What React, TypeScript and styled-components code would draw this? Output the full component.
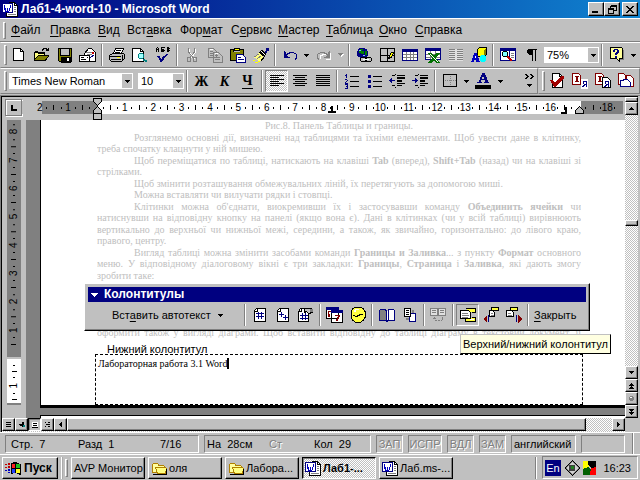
import React from "react";
import styled, { createGlobalStyle, css } from "styled-components";

const face = "#c0c0c0";
const shade = "#808080";
const navy = "#000080";
const checker = `conic-gradient(#fff 25%, ${face} 0 50%, #fff 0 75%, ${face} 0) 0 0 / 2px 2px`;

const raised = css`
  border: 1px solid;
  border-color: #fff #000 #000 #fff;
  box-shadow: inset -1px -1px ${shade};
`;
const sunken = css`
  border: 1px solid;
  border-color: ${shade} #fff #fff ${shade};
`;

const GlobalStyle = createGlobalStyle`
  *, *::before, *::after { box-sizing: border-box; }
  body { margin: 0; background: ${face}; font: 12px/14px "Liberation Sans", Arial, sans-serif; color: #000; }
  button, select { font: inherit; color: inherit; margin: 0; padding: 0; border: 0; border-radius: 0; background: none; outline: none; }
  u { text-underline-offset: 2px; text-decoration-thickness: 1px; }
`;

const Desktop = styled.div`
  display: flex;
  flex-direction: column;
  height: 100vh;
  min-height: 440px;
  overflow: hidden;
  background: ${face};
`;

/* ---------- title bar ---------- */

const TitleBar = styled.header`
  display: flex;
  align-items: center;
  gap: 3px;
  height: 18px;
  padding: 0 2px;
  background: linear-gradient(to right, #000080, #1084d0);
  color: #fff;
`;
const Title = styled.h1`
  flex: 1;
  margin: 0;
  font-size: 12px;
  line-height: 16px;
  font-weight: 700;
  white-space: nowrap;
`;
const WindowButtons = styled.div`
  display: flex;
  button:last-child { margin-left: 2px; }
`;
const CaptionButton = styled.button`
  ${raised}
  display: flex;
  align-items: center;
  justify-content: center;
  width: 16px;
  height: 14px;
  background: ${face};
`;

/* ---------- menus and toolbars ---------- */

const MenuBar = styled.nav`
  display: flex;
  align-items: center;
  height: 24px;
  padding-left: 3px;
  border-top: 1px solid #fff;
  border-bottom: 1px solid ${shade};
`;
const Grip = styled.span`
  flex: none;
  width: 3px;
  height: 17px;
  margin-right: 5px;
  border: 1px solid;
  border-color: #fff ${shade} ${shade} #fff;
`;
const MenuItem = styled.button<{ $w: number }>`
  flex: none;
  width: ${(p) => p.$w}px;
  text-align: left;
  white-space: nowrap;
`;
const ToolRow = styled.div`
  display: flex;
  height: 26px;
`;
const ToolBar = styled.div<{ $grow?: boolean }>`
  display: flex;
  align-items: center;
  flex: ${(p) => (p.$grow ? "1 1 auto" : "0 0 auto")};
  padding: 0 2px 0 3px;
  border: 1px solid;
  border-color: #fff ${shade} ${shade} transparent;
  ${Grip} { margin-right: 0; height: 20px; }
`;
const ToolButton = styled.button<{ $pressed?: boolean }>`
  display: flex;
  flex: none;
  align-items: center;
  justify-content: center;
  width: 23px;
  height: 22px;
  ${(p) => p.$pressed && css`${sunken} background: ${checker};`}
`;
const DropButton = styled(ToolButton)`
  width: 11px;
`;
const Separator = styled.span`
  flex: none;
  width: 2px;
  height: 22px;
  margin: 0 2px;
  border-left: 1px solid ${shade};
  border-right: 1px solid #fff;
`;
const Spacer = styled.span`
  flex: 1;
`;
const ComboBox = styled.label<{ $w: number }>`
  display: flex;
  flex: none;
  width: ${(p) => p.$w}px;
  height: 16px;
  margin-left: 2px;
  padding: 1px;
  background: #fff;
  & + & { margin-left: 5px; }
  select {
    flex: 1;
    min-width: 0;
    padding-left: 2px;
    appearance: none;
    font-size: 11px;
    line-height: 14px;
  }
`;
const ComboArrow = styled.span`
  display: flex;
  align-items: center;
  justify-content: center;
  width: 10px;
  background: ${face};
`;
const Letter = styled.span<{ $italic?: boolean; $under?: boolean }>`
  font: 700 14px/15px "Liberation Serif", "Times New Roman", serif;
  font-style: ${(p) => (p.$italic ? "italic" : "normal")};
  border-bottom: ${(p) => (p.$under ? "1px solid #000" : "0")};
`;

/* ---------- workspace ---------- */

const Workspace = styled.main`
  display: flex;
  flex: 1;
  min-height: 0;
  margin-top: 1px;
  border: solid ${shade};
  border-width: 1px 0 0 1px;
  padding-right: 2px;
`;
const DocumentColumn = styled.div`
  position: relative;
  display: flex;
  flex: 1;
  flex-direction: column;
  min-width: 0;
  border: solid #000;
  border-width: 1px 0 0 1px;
`;
const RulerRow = styled.div`
  position: relative;
  display: flex;
  flex: none;
  height: 23px;
  padding: 4px 0 6px 3px;
`;
const TabKind = styled.button`
  display: flex;
  flex: none;
  align-items: center;
  justify-content: center;
  width: 17px;
  height: 17px;
  margin-top: -2px;
  border: 1px solid ${shade};
  box-shadow: inset 1px 1px #fff, 1px 1px #fff;
`;
const HorizontalScale = styled.div`
  display: flex;
  flex: 1;
  min-width: 0;
  height: 13px;
  margin-right: 2px;
  padding-right: 5px;
  background: linear-gradient(to right, ${face} 20px, ${shade} 20px 75px, #fff 75px calc(100% - 42px), ${shade} calc(100% - 42px));
`;
const Centimetre = styled.span<{ $vertical?: boolean }>`
  display: grid;
  ${(p) => (p.$vertical ? "grid-template-rows: repeat(4, minmax(0, 1fr)); width: 100%;" : "grid-template-columns: repeat(4, minmax(0, 1fr));")}
  flex: 1 1 0;
  min-width: 0;
  min-height: 0;
`;
const Mark = styled.span<{ $kind: "tick" | "dot" | "num"; $vertical?: boolean }>`
  display: flex;
  align-items: center;
  justify-content: center;
  font-size: 10px;
  line-height: 12px;
  white-space: nowrap;
  ${(p) => p.$vertical && "writing-mode: vertical-rl; transform: rotate(180deg);"}
  &::before {
    content: ${(p) => (p.$kind === "num" ? "none" : '""')};
    width: ${(p) => (p.$vertical ? (p.$kind === "tick" ? 5 : 2) : 1)}px;
    height: ${(p) => (p.$vertical ? 1 : p.$kind === "tick" ? 5 : 2)}px;
    background: #000;
  }
`;
const Marker = styled.svg<{ $x: number; $y: number; $fromRight?: boolean }>`
  position: absolute;
  top: ${(p) => p.$y}px;
  ${(p) => (p.$fromRight ? "right" : "left")}: ${(p) => p.$x}px;
`;
const PageRow = styled.div`
  display: flex;
  flex: 1;
  min-height: 0;
`;
const VerticalScale = styled.div`
  display: flex;
  flex-direction: column;
  flex: none;
  width: 14px;
  margin: 0 5px;
`;
const ScaleBody = styled.div<{ $white?: boolean }>`
  display: flex;
  flex-direction: column;
  flex: none;
  overflow: hidden;
  background: ${(p) => (p.$white ? "#fff" : shade)};
  height: ${(p) => (p.$white ? 46 : 237)}px;
  margin-bottom: 2px;
  padding-top: 1px;
  border-bottom: ${(p) => (p.$white ? `2px solid ${shade}` : "0")};
  ${Centimetre} { flex: none; height: 28px; }
  ${Centimetre}:nth-child(3n + 1) { height: 29px; }
`;
const FooterMarks = styled.span`
  display: flex;
  flex-direction: column;
  align-items: center;
  justify-content: space-between;
  height: 43px;
  padding: 5px 0 3px;
`;
const Pages = styled.div`
  display: flex;
  flex: 1;
  flex-direction: column;
  gap: 7px;
  min-width: 0;
  padding-left: 14px;
  background: ${shade};
`;
const Page = styled.article`
  display: flex;
  flex: 1;
  flex-direction: column;
  min-height: 0;
  padding: 0 44px 0 56px;
  border-left: 1px solid #000;
  border-bottom: 3px solid #000;
  background: #fff;
`;
const NextPage = styled.div`
  height: 3px;
  border-top: 1px solid #000;
  border-left: 1px solid #000;
  background: #fff;
`;
const BodyText = styled.section`
  flex: 1;
  min-height: 0;
  overflow: hidden;
  color: ${face};
  font: 10px/12px "Liberation Serif", "Times New Roman", serif;
`;
const Line = styled.p<{ $indent?: boolean; $align?: "center" | "justify" }>`
  margin: 0;
  height: 12px;
  padding-left: ${(p) => (p.$indent ? 37 : 0)}px;
  text-align: ${(p) => p.$align ?? "left"};
  text-align-last: ${(p) => p.$align ?? "left"};
  white-space: ${(p) => (p.$align === "justify" ? "normal" : "nowrap")};
  &:nth-child(even) { height: 11px; }
`;
const FooterLabel = styled.h2`
  z-index: 1;
  height: 12px;
  margin: 0 10px;
  font-size: 11px;
  line-height: 14px;
  font-weight: 400;
`;
const FooterBox = styled.section`
  height: 51px;
  margin: 0 -2px;
  padding: 3px 2px;
  border: 1px dashed #000;
  font: 10px/12px "Liberation Serif", "Times New Roman", serif;
  span { border-right: 2px solid #000; }
`;

/* ---------- scroll bars ---------- */

const VerticalScroll = styled.div`
  display: flex;
  flex-direction: column;
  flex: none;
  width: 13px;
  border-top: 1px solid #000;
  background: ${checker};
`;
const ScrollButton = styled.button`
  ${raised}
  display: flex;
  flex: none;
  align-items: center;
  justify-content: center;
  width: 13px;
  height: 13px;
  background: ${face};
`;
const SplitHandle = styled.span`
  ${raised}
  height: 5px;
  background: ${face};
`;
const VerticalThumb = styled.span`
  ${raised}
  height: 6px;
  margin-top: 105px;
  background: ${face};
`;
const ScrollCorner = styled.span`
  height: 14px;
  background: ${face};
`;
const HorizontalScroll = styled.div`
  display: flex;
  flex: none;
  height: 14px;
  padding-bottom: 1px;
  background: ${checker};
`;
const ViewButton = styled(ScrollButton)<{ $active?: boolean }>`
  ${(p) => p.$active && `border-color: #000 #fff #fff #000; box-shadow: inset 1px 1px ${shade};`}
`;
const HorizontalThumb = styled.span`
  ${raised}
  flex: 1;
  margin-right: 26px;
  background: ${face};
`;

/* ---------- floating toolbar ---------- */

const Palette = styled.section`
  position: absolute;
  left: 82px;
  top: 186px;
  width: 506px;
  padding: 3px 3px 2px;
  ${raised}
  background: ${face};
  font-size: 11px;
`;
const PaletteTitle = styled.h2`
  display: flex;
  align-items: center;
  gap: 6px;
  height: 15px;
  margin: 0;
  padding-left: 3px;
  background: ${navy};
  color: #fff;
  font-size: 12px;
  line-height: 15px;
`;
const PaletteBody = styled.div`
  display: flex;
  align-items: center;
  height: 26px;
  padding-left: 24px;
`;
const PaletteText = styled.button<{ $wide?: boolean }>`
  display: flex;
  align-items: center;
  justify-content: space-between;
  width: ${(p) => (p.$wide ? 111 : 50)}px;
  margin-right: ${(p) => (p.$wide ? 19 : 0)}px;
  padding-left: ${(p) => (p.$wide ? 0 : 3)}px;
  white-space: nowrap;
`;
const TipAnchor = styled.span`
  position: relative;
  ${ToolButton} { background: ${face}; }
`;
const Tooltip = styled.span`
  position: absolute;
  left: 4px;
  top: 30px;
  padding: 2px;
  border: 1px solid;
  border-color: ${face} #000 #000 ${face};
  background: #ffffe1;
  white-space: nowrap;
  line-height: 14px;
`;

/* ---------- status bar and taskbar ---------- */

const StatusBar = styled.footer`
  display: flex;
  align-items: center;
  flex: none;
  gap: 5px;
  height: 22px;
  padding: 1px 4px 0 5px;
  border-top: 1px solid #fff;
  font-size: 11px;
  white-space: nowrap;
`;
const StatusPanel = styled.div<{ $w: number; $off?: boolean }>`
  ${sunken}
  display: flex;
  flex: 0 1 auto;
  width: ${(p) => p.$w}px;
  height: 18px;
  padding: 0 2px;
  line-height: 16px;
  ${(p) => p.$off && `color: ${shade}; text-shadow: 1px 1px #fff; justify-content: center;`}
`;
const Field = styled.span<{ $w?: number; $off?: boolean }>`
  flex: none;
  width: ${(p) => (p.$w ? p.$w + "px" : "auto")};
  white-space: pre;
  ${(p) => p.$off && `color: ${shade}; text-shadow: 1px 1px #fff;`}
`;
const TaskBar = styled.footer`
  display: flex;
  flex: none;
  align-items: center;
  gap: 3px;
  height: 26px;
  padding: 1px 2px;
  border-top: 1px solid #fff;
  font-size: 11px;
`;
const TaskButton = styled.button<{ $active?: boolean }>`
  ${raised}
  display: flex;
  flex: none;
  align-items: center;
  gap: 2px;
  width: 74px;
  height: 22px;
  padding-left: 2px;
  white-space: nowrap;
  ${(p) => p.$active && `font-weight: 700; border-color: #000 #fff #fff #000; box-shadow: inset 1px 1px ${shade}; background: ${checker};`}
  svg { flex: none; }
`;
const StartButton = styled(TaskButton)`
  width: 56px;
  font-size: 12px;
  font-weight: 700;
`;
const TaskGrip = styled.span`
  width: 7px;
  height: 22px;
  padding: 2px 0;
  border-left: 2px ridge #fff;
  &::after {
    content: "";
    display: block;
    width: 3px;
    height: 18px;
    margin-left: 2px;
    border: 1px solid;
    border-color: #fff ${shade} ${shade} #fff;
  }
`;
const Tray = styled.div`
  ${sunken}
  display: flex;
  align-items: center;
  justify-content: space-between;
  width: 96px;
  height: 23px;
  padding: 0 6px 0 2px;
  time { padding-left: 5px; }
`;
const Language = styled.span`
  width: 16px;
  height: 16px;
  background: ${navy};
  color: #fff;
  line-height: 16px;
  text-align: center;
`;

/* ---------- icons ---------- */

const Icon = ({ w = 16, h = 16, children }: { w?: number; h?: number; children: React.ReactNode }) => (
  <svg width={w} height={h} viewBox={`0 0 ${w} ${h}`} fill="none" shapeRendering="crispEdges" aria-hidden="true">
    {children}
  </svg>
);
const P = ({ d, f, s }: { d: string; f?: string; s?: string }) => <path d={d} fill={f ?? "none"} stroke={s ?? "none"} />;

const Down = () => <Icon w={5} h={3}><P d="M0 0h5v1H0zM1 1h3v1H1zM2 2h1v1H2z" f="#000" /></Icon>;
const DownGray = () => <Icon w={6} h={4}><P d="M1 1h5v1H1zM2 2h3v1H2zM3 3h1v1H3z" f="#fff" /><P d="M0 0h5v1H0zM1 1h3v1H1zM2 2h1v1H2z" f={shade} /></Icon>;
const Up = () => <Icon w={5} h={3}><P d="M0 2h5v1H0zM1 1h3v1H1zM2 0h1v1H2z" f="#000" /></Icon>;

const WordDoc = () => (
  <Icon>
    <P d="M6.5 1.5h6l3 3v11h-11v-5" f="#fff" s="#000" />
    <P d="M12.5 1.5v3h3" s="#000" />
    <P d="M12 6h2v1h-2zM12 8h2v1h-2zM12 10h2v1h-2zM6 13h8v1H6z" f={shade} />
    <P d="M0 2h11v10H0z" f={navy} />
    <P d="M1 3h9v8H1z" f="#fff" />
    <P d="M2 4h1v3h1v3h1V7h1v3h1V7h1V4h1v3H8v3H7v1H3V9H2z" f="#0000c0" />
  </Icon>
);
const Folder = () => (
  <Icon>
    <P d="M1.5 12.5v-8l1-1h4l1 1v1h5l1 1v6z" f="#ffffa0" s="#b08000" />
    <P d="M4.5 7.5h10l1 1-1 5H6.5z" f="#ffff80" s="#b08000" />
    <P d="M2 14h14v1H2zM15 9h1v5h-1z" f="#000" />
  </Icon>
);
const Sheet = ({ children }: { children?: React.ReactNode }) => (
  <Icon>
    <P d="M4.5 1.5h9v13h-11v-11z" f="#fff" s="#000" />
    <P d="M5.5 2v2.5H3" s="#000" />
    {children}
  </Icon>
);

const icons: Record<string, React.ReactNode> = {
  new: <Icon><P d="M2.5 1.5h7l3 3v9h-10z" f="#fff" s="#000" /><P d="M9.5 1.5v3h3" s="#000" /></Icon>,
  open: (
    <Icon w={17}>
      <P d="M1 5h1V4h3v1h7v3h4v1l-3 5H1z" f="#000" />
      <P d="M2 6h3v1h6v1H5l-3 4z" f="#ffff80" />
      <P d="M5 9h10l-3 4H2z" f="#808000" />
      <P d="M9.5 3.5v-1h1v-1h3v1h1v1h1M15.5 1v3M13 3.5h3" s="#000" />
    </Icon>
  ),
  save: (
    <Icon>
      <P d="M1.5 1.5h13v13h-12l-1-1z" f="#808000" s="#000" />
      <P d="M3.5 2v6.5h9V2M4 10h9v5H4z" s="#000" f="#000" />
      <P d="M4 2h8v6H4z" f={face} />
      <P d="M10 11h2v3h-2z" f="#fff" />
    </Icon>
  ),
  mail: (
    <Icon w={17}>
      <P d="M5.5 6.5l4-5h3l4 4v9h-11z" f="#fff" s="#000" />
      <P d="M7 5h8M8 7h5" s={shade} />
      <P d="M13 5h2v2h-2z" f="#c00000" />
      <P d="M8.5 8.5l3 2 4-3" s={navy} />
      <P d="M.5 8.5h10v6H.5z" f="#fff" s="#000" />
      <P d="M2 10h3v1H2zM2 12h5v1H2zM8 10h1v1H8z" f="#000" />
    </Icon>
  ),
  print: (
    <Icon>
      <P d="M4.5 6.5l2-5h8l-2 5" f="#fff" s="#000" />
      <P d="M7 3h5v1H7zM6 5h5v1H6z" f="#000" />
      <P d="M.5 8.5l3-2h11l1 1v4l-3 3H2.5l-2-2z" f={face} s="#000" />
      <P d="M1 9h11v1H1zM2 12h10v1H2zM13 8h1v5h-1z" f="#000" />
      <P d="M8 10h3v1H8z" f="#ffff00" />
    </Icon>
  ),
  preview: (
    <Icon w={17}>
      <P d="M1.5 1.5h8l3 3v10h-11z" f="#fff" s="#000" />
      <P d="M9.5 1.5v3h3" s="#000" />
      <P d="M8 6h4v1h1v4h-1v1H8v-1H7V7h1z" f="#008080" />
      <P d="M8 7h4v4H8z" f="#a0ffff" />
      <P d="M12 12h2v1h2v2h-2v-1h-2z" f="#008080" />
    </Icon>
  ),
  spell: (
    <Icon>
      <P d="M1 5V1h1V0h1v1h1v4H3V3H2v2zM6 0h4v1H7v1h2v1h1v1H9v1H6zM12 0h2v1h1v1h-1v1h1v1h-1v1h-2zM2 1v1h1V1z" f="#000" />
      <P d="M2 9h3v2h1v1h1v-2h1V9h2V8h1V7h2v1h-1v1h-1v1h-1v1H9v2H8v1H7v1H5v-2H4v-2H3v-1H2z" f={navy} />
    </Icon>
  ),
  cut: (
    <Icon>
      <P d="M5.5 2v3l5 7M11.5 2v3l-5 7" s="#fff" />
      <P d="M4.5 1v4l5 6M10.5 1v4l-5 6M3.5 10.5h3v4h-3zM9.5 10.5h3v4h-3z" s={shade} />
    </Icon>
  ),
  copy: (
    <Icon>
      <P d="M1.5 1.5h5l3 3v6h-8zM6.5 5.5h5l4 4v6h-9z" f={face} s={shade} />
      <P d="M3 4.5h3M3 6.5h3M3 8.5h3M8 8.5h3M8 10.5h5M8 12.5h5" s={shade} />
      <P d="M2.5 2.5h3M7.5 6.5h3" s="#fff" />
    </Icon>
  ),
  paste: (
    <Icon>
      <P d="M.5 2.5h13v11H.5z" f="#808000" s="#000" />
      <P d="M4 1h6v4H3V3h1z" f="#000" /><P d="M5 2h4v1H5z" f="#ffff00" /><P d="M4 4h6v1H4z" f={face} />
      <P d="M6.5 7.5h6l3 3v5h-9z" f="#fff" s={navy} />
      <P d="M8 10.5h3M8 12.5h6" s={navy} />
    </Icon>
  ),
  brush: (
    <Icon w={18}>
      <P d="M14 1h3v3h-2v2h-2V4h1z" f={navy} />
      <P d="M9 3h2v1h1v1h1v1h1v2h-1v1h-2V8h-1V7H9V6H8V4h1z" f="#000" /><P d="M9 4h1v1h1v1h1v1h1v1h-1V7h-1V6h-1V5H9z" f="#fff" />
      <P d="M7 6l5 4-4 4H6l-3-3H2v-1z" f="#ffff80" />
      <P d="M7.5 5.5l5 4-4 5" s="#000" /><P d="M7 7l-5 3M9 9l-4 3" s={shade} />
      <P d="M1 13h2v1H1zM3 15h3v1H3zM6 14h2v1H6z" f="#ffff00" />
    </Icon>
  ),
  undo: <Icon><P d="M2 4v7h6v-1H6V9H5V8h1V7h2V6h4v1h2v4h-1v2h1v-1h1V7h-1V6h-2V5H7v1H5v1H4V5H3V4z" f={navy} /></Icon>,
  redo: (
    <Icon>
      <P d="M14.5 6v6h-5M4 12V8h2V7h5" s="#fff" />
      <P d="M14 4v7H8v-1h2V9h1V8h-1V7H8V6H4v1H2v4h1v2H2v-1H1V7h1V6h2V5h5v1h2v1h1V5h1V4z" f={shade} />
    </Icon>
  ),
  link: (
    <Icon w={17}>
      <P d="M4 1h6v1h2v2h1v5h-1v1h-2v1H5v-1H3V9H2V4h1V2h1z" f={navy} />
      <P d="M5 2h3v1H7v1h2v3H6V6H4V4h1zM10 4h2v4h-2z" f="#008000" /><P d="M4 3h2v1H4zM8 8h2v1H8z" f="#80c0ff" />
      <P d="M5.5 11.5l1-1h4l1 1v2l-1 1h-4l-1-1zM10.5 11.5l1-1h4l1 1v2l-1 1h-4l-1-1z" f={face} s="#000" />
      <P d="M8 12h6v1H8z" f="#fff" />
    </Icon>
  ),
  borders: (
    <Icon>
      <P d="M1.5 1.5h14v13h-14zM1 8.5h14M8.5 2v12" s="#000" />
      <P d="M12 5h3v2h-1v2h-1v2h-2v1H9v-2h1V8h1V6h1z" f="#000" /><P d="M12 6h2v1h-1v2h-1v1h-1V8h1z" f="#ffff00" />
    </Icon>
  ),
  table: (
    <Icon>
      <P d="M0 2h16v12H0z" f={navy} />
      <P d="M1 5h14v8H1z" f={shade} />
      <P d="M1 5h3v2H1zM5 5h3v2H5zM9 5h2v2H9zM12 5h3v2h-3zM1 8h3v2H1zM5 8h3v2H5zM9 8h2v2H9zM12 8h3v2h-3zM1 11h3v2H1zM5 11h3v2H5zM9 11h2v2H9zM12 11h3v2h-3z" f="#fff" />
    </Icon>
  ),
  excel: (
    <Icon>
      <P d="M0 1h16v12H0z" f={navy} /><P d="M1 4h14v8H1z" f="#fff" />
      <P d="M1 7.5h14M1 10.5h14M5.5 4v8M10.5 4v8" s={shade} />
      <P d="M3 6h4l2 3 2-3h4l-4 5 4 5h-4l-2-3-2 3H3l4-5z" f="#007000" /><P d="M5 7l8 8" s="#fff" />
    </Icon>
  ),
  columns: (
    <Icon>
      <P d="M1 2h14v12H1z" f="#e0e0e0" />
      {[2, 4, 6, 8, 10, 12].map((y) => <P key={y} d={`M1 ${y}h6v1H1zM9 ${y}h6v1H9z`} f={shade} />)}
    </Icon>
  ),
  drawing: (
    <Icon>
      <P d="M6.5 2.5l2-2h7v7l-2 2h-7z" f="#ffff00" s="#000" /><P d="M13 3l2-2v6l-2 2z" f="#808000" />
      <P d="M3 6h3v2h1v3h1v3h1v1H5v-2H3v2H0v-1h1v-3h1V8h1z" f="#0000c0" /><P d="M4 9h1v2H4z" f="#fff" />
      <P d="M10 8h4v1h1v5h-1v1h-4v-1H9V9h1z" f="#00ffff" />
    </Icon>
  ),
  docmap: (
    <Icon>
      <P d="M0 1h16v13H0z" f={navy} /><P d="M1 4h8v9H1zM10 4h5v9h-5z" f="#fff" />
      <P d="M11 6.5h3M11 8.5h3M11 10.5h3" s={shade} />
      <P d="M3 4h4v1h1v4H7v1H3V9H2V5h1z" f="#000" /><P d="M3 5h4v4H3z" f="#80ffff" />
      <P d="M7 9h2v1h1v1h1v1h1v2h-2v-1H9v-1H8v-1H7z" f="#c00000" />
    </Icon>
  ),
  pilcrow: <Icon><P d="M5 2h9v1h-1v11h-1V3h-2v11H9V8H6V7H5V6H4V3h1z" f="#000" /></Icon>,
  help: (
    <Icon>
      <P d="M1.5.5h11l1 1v10h-3v3l-3-3h-6z" f="#ffff99" s="#000" /><P d="M14 3h1v10h-4v-1h3z" f={shade} />
      <P d="M4 3h1V2h4v1h1v3H9v1H8v1H6V6h1V5h1V3H6v2H4zM6 9h2v2H6z" f={navy} />
    </Icon>
  ),
  left: <Icon>{[2, 4, 6, 8, 10, 12].map((y, i) => <P key={y} d={`M1 ${y}h${i % 2 ? 9 : 14}v1H1z`} f="#000" />)}</Icon>,
  center: <Icon>{[2, 4, 6, 8, 10, 12].map((y, i) => <P key={y} d={i % 2 ? `M3 ${y}h10v1H3z` : `M1 ${y}h14v1H1z`} f="#000" />)}</Icon>,
  justify: <Icon>{[2, 4, 6, 8, 10, 12].map((y) => <P key={y} d={`M1 ${y}h14v1H1z`} f="#000" />)}</Icon>,
  numbers: (
    <Icon>
      <P d="M6 3h9v1H6zM6 8h9v1H6zM6 13h9v1H6z" f="#000" />
      <P d="M2 1h1v4H2zM1 2h1v1H1zM1 6h2v1h1v1H3v1H2v1h2v1H1V9h1V8h1V7H1zM1 11h3v5H1v-1h2v-1H2v-1h1v-1H1z" f={navy} />
    </Icon>
  ),
  bullets: <Icon><P d="M6 3h9v1H6zM6 8h9v1H6zM6 13h9v1H6z" f="#000" /><P d="M1 2h3v3H1zM1 7h3v3H1zM1 12h3v3H1z" f={navy} /></Icon>,
  outdent: (
    <Icon w={17}>
      <P d="M3 2h3v1H3zM8 2h8v1H8zM8 4h8v2H8zM8 7h5v2H8zM8 10h8v1H8zM3 12h3v1H3zM8 12h5v1H8zM6 14h1v1H6zM6 1h1v1H6z" f="#000" />
      <P d="M0 7h1V6h1V5h1v2h3v1H3v2H2V9H1V8H0z" f={navy} />
    </Icon>
  ),
  indent: (
    <Icon w={17}>
      <P d="M3 2h3v1H3zM8 2h8v1H8zM8 4h8v2H8zM8 7h5v2H8zM8 10h8v1H8zM3 12h3v1H3zM8 12h5v1H8zM6 14h1v1H6zM6 1h1v1H6z" f="#000" />
      <P d="M0 7h3V5h1v1h1v1h1v1H5v1H4v1H3V8H0z" f={navy} />
    </Icon>
  ),
  frame: <Icon><P d="M1.5 1.5h13v12h-13z" s="#000" /><path d="M3 7.5h11M8.5 3v10" stroke={shade} strokeDasharray="1 1" /></Icon>,
  color: <Icon w={17}><P d="M7 0h3v2h1v2h1v3h1v2h1v1h-5V9h1V7H6v2h1v1H2V9h2V7h1V4h1V2h1zM7 4v2h2V4z" f={navy} /><P d="M0 12h16v4H0z" f="#000" /></Icon>,
  more: <Icon w={10} h={14}><P d="M0 0h2v1h1v1h1v1H3v1H2v1H0V4h1V3h1V2H1V1H0zM5 0h2v1h1v1h1v1H8v1H7v1H5V4h1V3h1V2H6V1H5zM2 10h5v1H2zM3 11h3v1H3zM4 12h1v1H4z" f="#000" /></Icon>,
  accept: (
    <Icon>
      <P d="M3.5.5h7l3 3v11h-10z" f="#fff" s="#000" /><P d="M10.5.5v3h3" s="#000" />
      <P d="M1 7h3l2 3 6-7h3v2l-8 9H5z" f="#a00000" />
    </Icon>
  ),
  pageI: (
    <Icon>
      <P d="M.5.5h6l2 2v9h-8z" f="#fff" s="#800000" /><P d="M3 3h4v1H6v4h1v1H3V8h1V4H3z" f="#800000" />
      <P d="M9 6h7v10H9z" f="#fff" /><P d="M11 8h4v6h-1v-2h-1v1h-1v1h-2v-1h1v-1h1v-1h-1zM12 9v2h2V9z" f={navy} />
    </Icon>
  ),
  pagesI: (
    <Icon>
      <P d="M.5.5h6l2 2v9h-8z" f="#fff" s="#800000" /><P d="M3 3h4v1H6v4h1v1H3V8h1V4H3z" f="#800000" />
      <P d="M7.5 4.5h5l3 3v7h-8z" f="#fff" s="#000" /><P d="M10 8h4v6h-1v-2h-1v1h-1v1H9v-1h1v-1h1v-1h-1zM11 9v2h2V9z" f={navy} />
    </Icon>
  ),
  pages: (
    <Icon>
      <P d="M.5.5h5l2 2v9h-7z" f="#fff" s="#800000" /><P d="M8.5 2.5h4l3 3v8h-7z" f="#fff" s="#800000" />
      <P d="M2.5 7.5h3v-1h4l3 3v4h-10z" f="#fff" s={navy} />
    </Icon>
  ),
  pageNo: <Sheet><P d="M6 5h1v7H6zM9 5h1v7H9zM4 6h8v1H4zM4 9h8v1H4z" f={navy} /></Sheet>,
  pageCount: <Sheet><P d="M6 5h1v5H6zM4 7h5v1H4zM10 8h1v5h-1zM8 10h5v1H8z" f={navy} /></Sheet>,
  pageFormat: (
    <Icon w={17}>
      <P d="M3.5 1.5h8v13h-10v-10z" f="#fff" s="#000" /><P d="M4.5 2v2.5H2" s="#000" />
      <P d="M5 6h1v7H5zM8 6h1v7H8zM3 8h8v1H3zM3 11h8v1H3z" f={navy} />
      <P d="M7.5 2.5l1-1h5l2 1v3l-4 1-2-2-2 1z" f={face} s="#000" /><P d="M13 2h3v3h-3z" f={shade} />
    </Icon>
  ),
  date: (
    <Icon w={17}>
      <P d="M.5.5h12v11H.5zM5.5 4.5h11v11h-11z" f="#fff" s="#000" /><P d="M0 0h13v3H0zM5 3h12v3H5z" f={navy} />
      <P d="M2 4h3v1H3v2h1v3H2z" f="#800000" /><P d="M9 8h5v2h-1v2h-1v2h-2v-2h1v-2h1V9H9z" f="#800000" />
    </Icon>
  ),
  time: (
    <Icon>
      <P d="M5 .5h6l2 1 2 3v6l-2 3-3 2H6l-3-2-2-3v-6l2-3z" f="#ffff40" s="#000" />
      <P d="M3 8h2v1h2V8h2V7h4v1h-3v1H8v1H5V9H3z" f="#000" />
      <P d="M5 2h4v1H5zM4 3h2v2H4z" f="#fff" />
    </Icon>
  ),
  setup: (
    <Icon>
      <P d="M1 3h6v1h2V3h6v10H1z" f="#fff" /><P d="M1 3h6v10H1z" f={shade} />
      <P d="M.5 3v10h6l1 1h1l1-1h6V3M1 2.5h5l1 1v10M15 2.5h-5l-1 1v10" s={navy} />
    </Icon>
  ),
  same: (
    <Icon>
      <P d="M7.5 6.5h6v8h-6z" f="#fff" s={navy} /><P d="M2.5 1.5h6v8h-6z" f="#fff" s="#000" />
      <P d="M4 3h3v1H4zM4 5h3v1H4zM4 7h3v1H4z" f="#000" /><P d="M10 3h2v3h-2zM4 11h3v2H4z" f={shade} />
    </Icon>
  ),
  linkPrev: (
    <Icon w={17}>
      <P d="M.5 1.5h7v7h-7zM8.5 1.5h7v7h-7z" f="#e0e0e0" s={shade} />
      <P d="M2 3.5h4M2 5.5h4M10 3.5h4M10 5.5h4" s={shade} />
      <P d="M4 10h1v2H4zM12 10h1v3h-1zM5 13h2v1H5zM8 13h2v1H8zM11 13h1v1h-1zM3 11h3v1H3z" f={shade} />
    </Icon>
  ),
  switchHF: (
    <Icon>
      <P d="M5.5 1.5h10v4h-4M5.5 11.5v3h10v-4h-4" f="#ffff40" s="#000" />
      <P d="M.5 3.5h8l2 2v6H.5z" f="#fff" s="#000" />
      <P d="M2 6h6v1H2zM2 8h7v1H2zM2 10h6v1H2z" f={shade} /><P d="M10 12h4v1h-4z" f="#fff" />
    </Icon>
  ),
  prevHF: (
    <Icon>
      <P d="M8.5.5h7v3h-7z" f="#ffff40" s="#000" /><P d="M6.5 3.5h3l2 2v4h-5z" f="#fff" s="#000" />
      <P d="M8 6h2v1H8zM8 8h3v1H8z" f={shade} /><P d="M0 12l4-4v8z" f="#800000" /><P d="M5 8h1v7H5z" f={navy} />
    </Icon>
  ),
  nextHF: (
    <Icon>
      <P d="M4.5.5h7v3h-7z" f="#ffff40" s="#000" /><P d="M.5 3.5h5l2 2v4h-7z" f="#fff" s="#000" />
      <P d="M2 6h3v1H2zM2 8h4v1H2z" f={shade} /><P d="M16 12l-4-4v8z" f="#800000" /><P d="M10 8h1v7h-1z" f={navy} />
    </Icon>
  ),
};

const Tool = ({ id, label, pressed }: { id: string; label: string; pressed?: boolean }) => (
  <ToolButton type="button" aria-label={label} aria-pressed={pressed} $pressed={pressed}>{icons[id]}</ToolButton>
);
const Combo = ({ label, value, w }: { label: string; value: string; w: number }) => (
  <ComboBox $w={w}>
    <select aria-label={label} defaultValue={value}><option>{value}</option></select>
    <ComboArrow><Down /></ComboArrow>
  </ComboBox>
);

/* One centimetre of a ruler; the first cell of the horizontal one has no marks before its number. */
const Cm = ({ n, vertical, first }: { n: string; vertical?: boolean; first?: boolean }) => (
  <Centimetre $vertical={vertical}>
    {!vertical && <><Mark $kind={first ? "num" : "tick"} /><Mark $kind={first ? "num" : "dot"} /></>}
    {vertical && <Mark $kind="dot" $vertical />}
    <Mark $kind="num" $vertical={vertical}>{n}</Mark>
    <Mark $kind="dot" $vertical={vertical} />
    {vertical && <Mark $kind="tick" $vertical />}
  </Centimetre>
);
const scale = ["2", "1", "", ...Array.from({ length: 16 }, (_, i) => String(i + 1)), "", "18"];

const menu: [string, string, string, number][] = [
  ["", "Ф", "айл", 39], ["", "П", "равка", 48], ["", "В", "ид", 29], ["Вст", "а", "вка", 53], ["Фор", "м", "ат", 51],
  ["С", "е", "рвис", 47], ["", "М", "астер", 48], ["", "Т", "аблица", 53], ["", "О", "кно", 36], ["", "С", "правка", 50],
];

export default function App() {
  return (
    <Desktop>
      <GlobalStyle />
      <TitleBar>
        <WordDoc />
        <Title>Лаб1-4-word-10 - Microsoft Word</Title>
        <WindowButtons>
          <CaptionButton aria-label="Свернуть"><Icon w={8} h={8}><P d="M0 6h6v2H0z" f="#000" /></Icon></CaptionButton>
          <CaptionButton aria-label="Восстановить"><Icon w={9} h={9}><P d="M3 .5h5.5v5H6M2.5 3V.5M2 1.5h6M.5 3.5h5v5h-5zM0 4.5h6" s="#000" /></Icon></CaptionButton>
          <CaptionButton aria-label="Закрыть"><Icon w={8} h={7}><P d="M0 0h2v1h1v1h2V1h1V0h2v1H7v1H6v1H5v1h1v1h1v1h1v1H6V6H5V5H3v1H2v1H0V6h1V5h1V4h1V3H2V2H1V1H0z" f="#000" /></Icon></CaptionButton>
        </WindowButtons>
      </TitleBar>

      <MenuBar>
        <Grip />
        {menu.map(([a, b, c, w]) => <MenuItem key={a + b + c} type="button" $w={w}>{a}<u>{b}</u>{c}</MenuItem>)}
      </MenuBar>

      <ToolRow>
        <ToolBar>
          <Grip />
          <Tool id="new" label="Создать" /><Tool id="open" label="Открыть" /><Tool id="save" label="Сохранить" /><Tool id="mail" label="Сообщение" />
          <Separator />
          <Tool id="print" label="Печать" /><Tool id="preview" label="Просмотр" /><Tool id="spell" label="Правописание" />
          <Separator />
          <Tool id="cut" label="Вырезать" /><Tool id="copy" label="Копировать" /><Tool id="paste" label="Вставить" /><Tool id="brush" label="Формат по образцу" />
          <Separator />
          <Tool id="undo" label="Отменить" /><DropButton aria-label="Список отмены"><Down /></DropButton>
          <Tool id="redo" label="Вернуть" /><DropButton aria-label="Список возврата"><DownGray /></DropButton>
          <Separator />
          <Tool id="link" label="Гиперссылка" /><Tool id="borders" label="Таблицы и границы" /><Tool id="table" label="Добавить таблицу" />
          <Tool id="excel" label="Таблица Excel" /><Tool id="columns" label="Колонки" /><Tool id="drawing" label="Рисование" />
          <Separator />
          <Tool id="docmap" label="Схема документа" /><Tool id="pilcrow" label="Непечатаемые знаки" />
          <Combo label="Масштаб" value="75%" w={55} />
          <Separator />
          <Tool id="help" label="Справка" /><DropButton aria-label="Другие кнопки"><Down /></DropButton>
        </ToolBar>
      </ToolRow>

      <ToolRow>
        <ToolBar $grow>
          <Grip />
          <Combo label="Шрифт" value="Times New Roman" w={124} />
          <Combo label="Размер" value="10" w={46} />
          <Separator />
          <ToolButton aria-label="Полужирный"><Letter>Ж</Letter></ToolButton>
          <ToolButton aria-label="Курсив"><Letter $italic>К</Letter></ToolButton>
          <ToolButton aria-label="Подчеркнутый"><Letter $under>Ч</Letter></ToolButton>
          <Separator />
          <Tool id="left" label="По левому краю" pressed /><Tool id="center" label="По центру" /><Tool id="justify" label="По ширине" />
          <Separator />
          <Tool id="numbers" label="Нумерация" /><Tool id="bullets" label="Маркеры" /><Tool id="outdent" label="Уменьшить отступ" /><Tool id="indent" label="Увеличить отступ" />
          <Separator />
          <Tool id="frame" label="Границы" /><DropButton aria-label="Виды границ"><Down /></DropButton>
          <Tool id="color" label="Цвет шрифта" /><DropButton aria-label="Цвета"><Down /></DropButton>
          <Spacer />
          <DropButton aria-label="Другие кнопки">{icons.more}</DropButton>
        </ToolBar>
        <ToolBar>
          <Grip />
          <Tool id="accept" label="Принять" /><Tool id="pageI" label="Перевести" /><Tool id="pagesI" label="Страницы" /><Tool id="pages" label="Копии" />
        </ToolBar>
      </ToolRow>

      <Workspace>
        <DocumentColumn>
          <RulerRow>
            <TabKind aria-label="Табуляция"><Icon w={6} h={6}><P d="M0 0h2v4h4v2H0z" f="#000" /></Icon></TabKind>
            <HorizontalScale>{scale.map((n, i) => <Cm key={i} n={n} first={i === 0} />)}</HorizontalScale>
            <Marker $x={91} $y={1} width="9" height="23" viewBox="0 0 9 23" shapeRendering="crispEdges">
              <path d="M.5.5h8v3l-4 4-4-4zM.5 15.5v-3l4-4 4 4v3zM.5 15.5h8v6h-8z" fill={face} stroke="#000" />
            </Marker>
            <Marker $x={326} $y={9} width="8" height="7" viewBox="0 0 8 7" shapeRendering="crispEdges"><path d="M3 0h2v5h3v2H0V5h3z" fill="#000" /></Marker>
            <Marker $x={58} $fromRight $y={10} width="6" height="7" viewBox="0 0 6 7" shapeRendering="crispEdges"><path d="M4 0h2v7H0V5h4z" fill="#000" /></Marker>
            <Marker $x={41} $fromRight $y={9} width="9" height="8" viewBox="0 0 9 8" shapeRendering="crispEdges"><path d="M.5 7.5v-3l4-4 4 4v3z" fill={face} stroke="#000" /></Marker>
          </RulerRow>
          <PageRow>
            <VerticalScale>
              <ScaleBody>{["8", "7", "6", "5", "4", "3", "2", "1"].map((n) => <Cm key={n} n={n} vertical />)}</ScaleBody>
              <ScaleBody $white>
                <FooterMarks>
                  <Mark $kind="dot" $vertical /><Mark $kind="tick" $vertical /><Mark $kind="dot" $vertical />
                  <Mark $kind="num" $vertical>1</Mark>
                  <Mark $kind="dot" $vertical /><Mark $kind="tick" $vertical />
                </FooterMarks>
              </ScaleBody>
            </VerticalScale>
            <Pages>
              <Page>
                <BodyText>
                  <Line $align="center">Рис.8. Панель Таблицы и границы.</Line>
                  <Line $indent $align="justify">Розглянемо основні дії, визначені над таблицями та їхніми елементами. Щоб увести дане в клітинку,</Line>
                  <Line>треба спочатку клацнути у ній мишею.</Line>
                  <Line $indent $align="justify">Щоб переміщатися по таблиці, натискають на клавіші <b>Tab</b> (вперед), <b>Shift+Tab</b> (назад) чи на клавіші зі</Line>
                  <Line>стрілками.</Line>
                  <Line $indent>Щоб змінити розташування обмежувальних ліній, їх перетягують за допомогою миші.</Line>
                  <Line $indent>Можна вставляти чи вилучати рядки і стовпці.</Line>
                  <Line $indent $align="justify">Клітинки можна об'єднати, виокремивши їх і застосувавши команду <b>Объединить ячейки</b> чи</Line>
                  <Line $align="justify">натиснувши на відповідну кнопку на панелі (якщо вона є). Дані в клітинках (чи у всій таблиці) вирівнюють</Line>
                  <Line $align="justify">вертикально до верхньої чи нижньої межі, середини, а також, як звичайно, горизонтально: до лівого краю,</Line>
                  <Line>правого, центру.</Line>
                  <Line $indent $align="justify">Вигляд таблиці можна змінити засобами команди <b>Границы и Заливка</b>... з пункту <b>Формат</b> основного</Line>
                  <Line $align="justify">меню. У відповідному діалоговому вікні є три закладки: <b>Границы</b>, <b>Страница</b> і <b>Заливка</b>, які дають змогу</Line>
                  <Line>зробити таке:</Line>
                  <Line /><Line /><Line /><Line />
                  <Line $align="justify">оформити також у вигляді діаграми. Щоб вставити відповідну до таблиці діаграму в текстовий документ, її</Line>
                </BodyText>
                <FooterLabel>Нижний колонтитул</FooterLabel>
                <FooterBox><span>Лабораторная работа 3.1 Word</span></FooterBox>
              </Page>
              <NextPage />
            </Pages>
          </PageRow>
          <HorizontalScroll>
            <ViewButton aria-label="Обычный"><Icon w={5} h={5}><P d="M0 0h5v1H0zM0 2h5v1H0zM0 4h5v1H0z" f="#000" /></Icon></ViewButton>
            <ViewButton aria-label="Веб-документ"><Icon w={6} h={6}><P d="M0 2h3V0h2v5H3V4H1V3H0z" f="#000" /><P d="M4 3h2v2H4z" f="#008080" /></Icon></ViewButton>
            <ViewButton aria-label="Разметка" $active><Icon w={6} h={6}><P d="M0 0h6v6H0z" f="#fff" /><P d="M1 1h4v1H1zM1 3h4v1H1zM0 5h6v1H0z" f="#000" /></Icon></ViewButton>
            <ViewButton aria-label="Структура"><Icon w={6} h={5}><P d="M0 0h1v1H0zM3 0h2v1H3zM1 2h4v1H1zM0 4h1v1H0zM3 4h2v1H3z" f="#000" /></Icon></ViewButton>
            <ScrollButton aria-label="Влево"><Icon w={3} h={5}><P d="M2 0h1v5H2V4H1V3H0V2h1V1h1z" f="#000" /></Icon></ScrollButton>
            <HorizontalThumb />
            <ScrollButton aria-label="Вправо"><Icon w={3} h={5}><P d="M0 0h1v1h1v1h1v1H2v1H1v1H0z" f="#000" /></Icon></ScrollButton>
          </HorizontalScroll>

          <Palette aria-label="Колонтитулы">
            <PaletteTitle><Icon w={7} h={4}><P d="M0 0h7v1H0zM1 1h5v1H1zM2 2h3v1H2zM3 3h1v1H3z" f="#fff" /></Icon>Колонтитулы</PaletteTitle>
            <PaletteBody>
              <PaletteText type="button" $wide><span>Вст<u>а</u>вить автотекст</span><Down /></PaletteText>
              <Separator />
              <Tool id="pageNo" label="Номер страницы" /><Tool id="pageCount" label="Число страниц" /><Tool id="pageFormat" label="Формат номера" />
              <Separator />
              <Tool id="date" label="Дата" /><Tool id="time" label="Время" />
              <Separator />
              <Tool id="setup" label="Параметры страницы" /><Tool id="same" label="Основной текст" />
              <Separator />
              <Tool id="linkPrev" label="Как в предыдущем" />
              <Separator />
              <TipAnchor>
                <Tool id="switchHF" label="Верхний/нижний колонтитул" pressed />
                <Tooltip role="tooltip">Верхний/нижний колонтитул</Tooltip>
              </TipAnchor>
              <Tool id="prevHF" label="Предыдущий" /><Tool id="nextHF" label="Следующий" />
              <Separator />
              <PaletteText type="button"><span><u>З</u>акрыть</span></PaletteText>
            </PaletteBody>
          </Palette>
        </DocumentColumn>

        <VerticalScroll>
          <SplitHandle />
          <ScrollButton aria-label="Вверх"><Up /></ScrollButton>
          <VerticalThumb />
          <Spacer />
          <ScrollButton aria-label="Вниз"><Down /></ScrollButton>
          <ScrollButton aria-label="Предыдущая страница"><Icon w={5} h={6}><P d="M2 0h1v1h1v1H1V1h1zM0 2h5v1H0zM2 3h1v1h1v1h1v1H0V5h1V4h1z" f="#000" /></Icon></ScrollButton>
          <ScrollButton aria-label="Выбор объекта"><Icon w={5} h={5}><P d="M1 0h3v1h1v3H4v1H1V4H0V1h1z" f={shade} /><P d="M1 1h2v1H1z" f="#fff" /></Icon></ScrollButton>
          <ScrollButton aria-label="Следующая страница"><Icon w={5} h={6}><P d="M0 0h5v1H4v1H3v1h2v1H4v1H3v1H2V5H1V4H0V3h2V2H1V1H0z" f="#000" /></Icon></ScrollButton>
          <ScrollCorner />
        </VerticalScroll>
      </Workspace>

      <StatusBar>
        <StatusPanel $w={194}><Field $w={70}>{" Стр.  7"}</Field><Field $w={82}>Разд  1</Field><Field>7/16</Field></StatusPanel>
        <StatusPanel $w={167}><Field $w={62}>На  28см</Field><Field $w={45} $off>Ст</Field><Field>Кол  29</Field></StatusPanel>
        <StatusPanel $w={27} $off>ЗАП</StatusPanel>
        <StatusPanel $w={34} $off>ИСПР</StatusPanel>
        <StatusPanel $w={27} $off>ВДЛ</StatusPanel>
        <StatusPanel $w={27} $off>ЗАМ</StatusPanel>
        <StatusPanel $w={65}>английский</StatusPanel>
        <StatusPanel $w={44} />
        <Separator />
      </StatusBar>

      <TaskBar>
        <StartButton>
          <Icon w={17}>
            <P d="M0 4h2v1H0zM0 7h2v1H0zM3 3h2v2H3zM3 6h2v2H3z" f="#c00000" />
            <P d="M0 10h2v1H0zM3 9h2v2H3zM3 12h2v1H3z" f="#0000c0" />
            <P d="M6 3h2V2h4v1h2v1h2v11h-2v-1h-2v-1H8v1H6z" f="#000" />
            <P d="M7 4h3v4H7z" f="#ff2020" /><P d="M11 4h4v4h-4z" f="#20c020" /><P d="M7 9h3v4H7z" f="#2040ff" /><P d="M11 9h4v4h-4z" f="#ffff20" />
          </Icon>
          Пуск
        </StartButton>
        <TaskGrip />
        <TaskButton>AVP Монитор</TaskButton>
        <TaskButton><Folder />оля</TaskButton>
        <TaskButton><Folder />Лабора...</TaskButton>
        <TaskButton $active><WordDoc />Лаб1-...</TaskButton>
        <TaskButton><WordDoc />Лаб.ms-...</TaskButton>
        <Spacer />
        <Separator />
        <Tray>
          <Language>En</Language>
          <Icon><P d="M8 0l8 8-8 8-8-8z" f="#000" /><P d="M8 1l7 7-7 7-7-7z" f={shade} /><P d="M8 2l3 3H5zM2 8l3-3v6zM14 8l-3-3v6zM8 14l3-3H5z" f="#d0d0d0" /><P d="M5 5h6v6H5z" f="#404040" /><P d="M7 6h3v3H7z" f="#208020" /></Icon>
          <Icon w={13} h={14}><P d="M0 0h7v4L4 8H0z" f="#ffff00" /><P d="M5 0h8v6L9 8 5 4z" f="#000" /><P d="M0 8l5-2 4 3-2 5H0z" f="#006000" /><P d="M8 7l5-1v8H7z" f="#ff0000" /></Icon>
          <time>16:23</time>
        </Tray>
      </TaskBar>
    </Desktop>
  );
}
